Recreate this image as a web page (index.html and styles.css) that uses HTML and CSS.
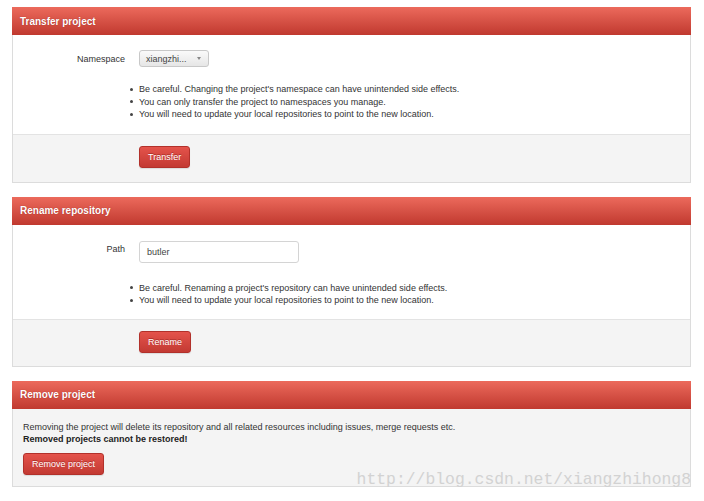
FILE: index.html
```html
<!DOCTYPE html>
<html>
<head>
<meta charset="utf-8">
<link rel="stylesheet" href="styles.css">
</head>
<body>
<div class="page">
  <section class="panel">
    <div class="panel-head">Transfer project</div>
    <div class="panel-body">
      <div class="row">
        <label class="row-label">Namespace</label>
        <div class="select"><span>xiangzhi...</span><span class="caret"></span></div>
      </div>
      <ul class="notes">
        <li>Be careful. Changing the project's namespace can have unintended side effects.</li>
        <li>You can only transfer the project to namespaces you manage.</li>
        <li>You will need to update your local repositories to point to the new location.</li>
      </ul>
    </div>
    <div class="panel-foot">
      <button class="btn">Transfer</button>
    </div>
  </section>

  <section class="panel">
    <div class="panel-head">Rename repository</div>
    <div class="panel-body body-rename">
      <div class="row">
        <label class="row-label label-path">Path</label>
        <div class="input">butler</div>
      </div>
      <ul class="notes notes-rename">
        <li>Be careful. Renaming a project's repository can have unintended side effects.</li>
        <li>You will need to update your local repositories to point to the new location.</li>
      </ul>
    </div>
    <div class="panel-foot foot-rename">
      <button class="btn">Rename</button>
    </div>
  </section>

  <section class="panel panel-remove">
    <div class="panel-head">Remove project</div>
    <div class="remove-body">
      <p class="remove-text">Removing the project will delete its repository and all related resources including issues, merge requests etc.</p>
      <p class="remove-text"><strong>Removed projects cannot be restored!</strong></p>
      <button class="btn btn-remove">Remove project</button>
    </div>
    <div class="watermark">http://blog.csdn.net/xiangzhihong8</div>
  </section>
</div>
</body>
</html>
```
FILE: styles.css
```css
* { box-sizing: border-box; }
html, body { margin: 0; padding: 0; background: #fff; }
body {
  font-family: "Liberation Sans", Arial, sans-serif;
  font-size: 9px;
  color: #333;
}
.page {
  padding: 7px 13px 0 12px;
  min-height: 501px;
  display: flex;
  flex-direction: column;
  gap: 14px;
}
.panel {
  border: 1px solid #dcdcdc;
  border-top: 0;
  position: relative;
}
.panel-head {
  height: 28px;
  margin: 0 -1px;
  padding: 0 8px;
  display: flex;
  align-items: center;
  background: linear-gradient(#ec6a5c, #c0392f);
  color: #fff;
  font-weight: bold;
  font-size: 10px;
  text-shadow: 0 0 1px rgba(120,0,0,0.6);
}
.panel-body {
  padding: 15px 0 13px 0;
}
.body-rename { padding-top: 16px; padding-bottom: 12px; }
.row {
  display: flex;
  align-items: center;
}
.row-label {
  width: 112px;
  text-align: right;
  margin-right: 14px;
  font-size: 9px;
}
.label-path { position: relative; top: -3px; }
.select {
  width: 70px;
  height: 17px;
  border: 1px solid #c8c8c8;
  border-radius: 3px;
  background: linear-gradient(#fafafa, #e6e6e6);
  display: flex;
  align-items: center;
  justify-content: space-between;
  padding: 0 7px 0 6px;
  color: #444;
}
.caret {
  width: 0; height: 0;
  border-left: 2.5px solid transparent;
  border-right: 2.5px solid transparent;
  border-top: 3px solid #888;
}
.input {
  width: 160px;
  height: 22px;
  border: 1px solid #d4d4d4;
  border-radius: 3px;
  padding: 0 7px;
  display: flex;
  align-items: center;
  color: #444;
}
.notes {
  margin: 16px 0 0 117px;
  padding-left: 0;
  list-style: none;
  line-height: 12.5px;
}
.notes li {
  display: flex;
  align-items: center;
  gap: 6px;
}
.notes li::before {
  content: "";
  width: 3px; height: 3px;
  border-radius: 50%;
  background: #444;
  flex: none;
}
.notes-rename { margin-top: 19px; }
.panel-foot {
  background: #f4f4f4;
  border-top: 1px solid #e3e3e3;
  padding: 11px 0 14px 126px;
}
.foot-rename { padding-bottom: 13px; }
.btn {
  font-family: "Liberation Sans", Arial, sans-serif;
  font-size: 9px;
  color: #fff;
  height: 22px;
  padding: 0 8px;
  border: 1px solid #b2312b;
  border-radius: 3px;
  background: linear-gradient(#e4534b, #c33a33);
  text-shadow: 0 -1px 0 rgba(100,0,0,0.4);
  box-shadow: 0 1px 1px rgba(0,0,0,0.1);
  display: block;
}
.panel-remove { background: #f4f4f4; }
.remove-body {
  padding: 12px 10px 11px 10px;
}
.remove-text {
  margin: 0;
  line-height: 12.5px;
  color: #333;
}
.remove-text strong { color: #222; }
.btn-remove { margin-top: 7px; }
.watermark {
  position: absolute;
  right: -1px;
  bottom: -4px;
  font-family: "Liberation Mono", "Courier New", monospace;
  font-size: 16.4px;
  line-height: 20px;
  color: #d2d2d2;
}
```
